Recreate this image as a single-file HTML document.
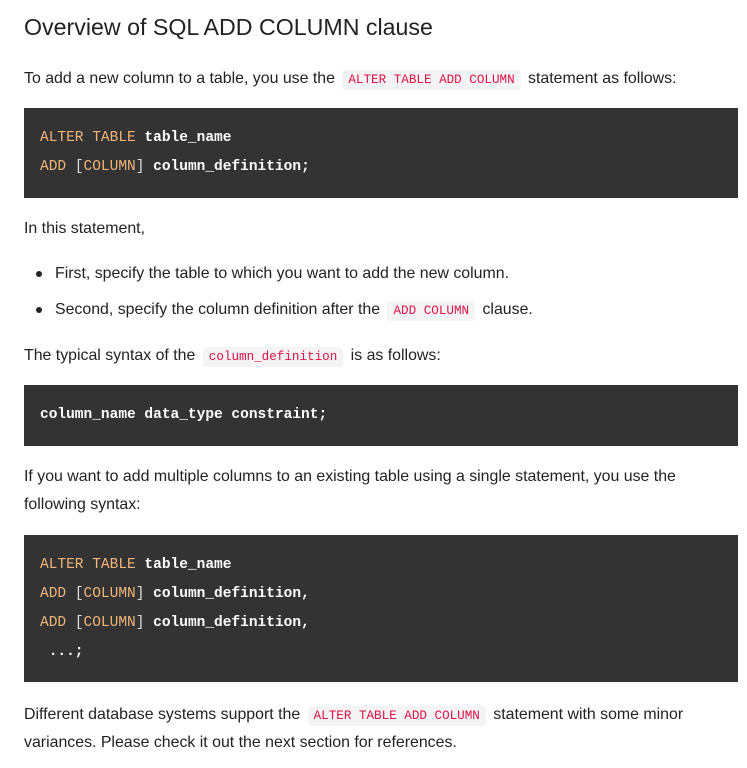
<!DOCTYPE html>
<html><head><meta charset="utf-8"><style>
body{margin:0;background:#fff;width:747px;height:768px;position:relative;overflow:hidden;font-family:"Liberation Sans",sans-serif;color:#222;}
.t{position:absolute;left:24px;font-size:15.9px;line-height:28px;white-space:nowrap;}
h2{position:absolute;left:24px;top:9px;margin:0;font-weight:normal;font-size:23.2px;line-height:36px;color:#222;}
code{font-family:"Liberation Mono",monospace;font-size:12.6px;color:#dd1144;background:#f4f4f4;padding:3px 6px;border-radius:3px;margin:0 3px;}
.pre{position:absolute;left:24px;width:714px;background:#333;color:#fff;font-family:"Liberation Mono",monospace;font-size:14.5px;font-weight:bold;line-height:29px;padding-left:16px;box-sizing:border-box;white-space:pre;}
.k{color:#f2b57a;font-weight:normal}
.b{font-weight:normal;color:#ddd}
.dot{position:absolute;left:36px;width:6px;height:6px;border-radius:50%;background:#222;}
</style></head><body>
<h2>Overview of SQL ADD COLUMN clause</h2>
<div class="t" style="top:65px">To add a new column to a table, you use the <code>ALTER TABLE ADD COLUMN</code> statement as follows:</div>
<div class="pre" style="top:108px;height:90px;padding-top:16px"><span class="k">ALTER TABLE</span> table_name
<span class="k">ADD</span> <span class="b">[</span><span class="k">COLUMN</span><span class="b">]</span> column_definition;</div>
<div class="t" style="top:215px">In this statement,</div>
<div class="dot" style="top:271px"></div>
<div class="t" style="top:260px;left:55px">First, specify the table to which you want to add the new column.</div>
<div class="dot" style="top:307px"></div>
<div class="t" style="top:296px;left:55px">Second, specify the column definition after the <code>ADD COLUMN</code> clause.</div>
<div class="t" style="top:342px">The typical syntax of the <code>column_definition</code> is as follows:</div>
<div class="pre" style="top:385px;height:61px;padding-top:16px">column_name data_type constraint;</div>
<div class="t" style="top:463px">If you want to add multiple columns to an existing table using a single statement, you use the</div>
<div class="t" style="top:491px">following syntax:</div>
<div class="pre" style="top:535px;height:147px;padding-top:16px"><span class="k">ALTER TABLE</span> table_name
<span class="k">ADD</span> <span class="b">[</span><span class="k">COLUMN</span><span class="b">]</span> column_definition,
<span class="k">ADD</span> <span class="b">[</span><span class="k">COLUMN</span><span class="b">]</span> column_definition,
 ...;</div>
<div class="t" style="top:701px">Different database systems support the <code>ALTER TABLE ADD COLUMN</code> statement with some minor</div>
<div class="t" style="top:729px">variances. Please check it out the next section for references.</div>
</body></html>
